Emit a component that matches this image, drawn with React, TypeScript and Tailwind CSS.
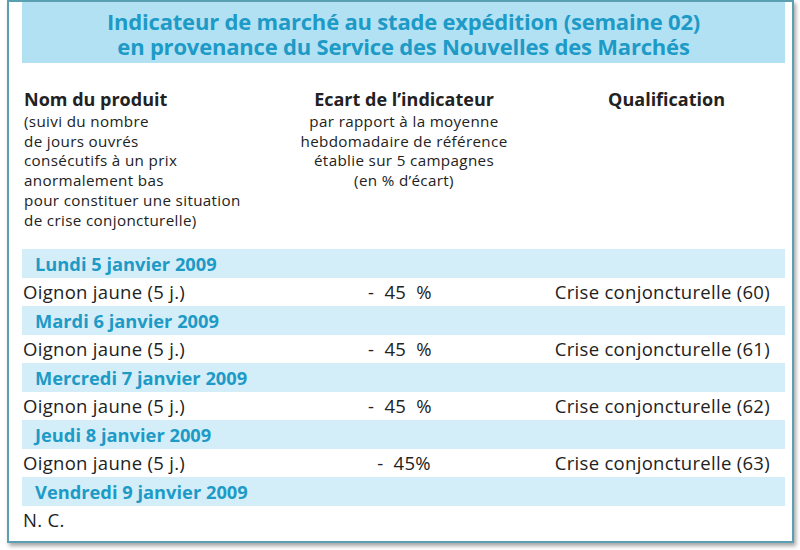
import React from "react";

const days = [
  { day: "Lundi 5 janvier 2009", value: "- 45 %", q: "Crise conjoncturelle (60)", vshift: "pl-[10px]" },
  { day: "Mardi 6 janvier 2009", value: "- 45 %", q: "Crise conjoncturelle (61)", vshift: "pl-[10px]" },
  { day: "Mercredi 7 janvier 2009", value: "- 45 %", q: "Crise conjoncturelle (62)", vshift: "pl-[10px]" },
  { day: "Jeudi 8 janvier 2009", value: "- 45%", q: "Crise conjoncturelle (63)", vshift: "pl-[18px]" },
];

export default function App() {
  return (
    <div
      className="w-[800px] h-[550px] bg-white pl-[7px] overflow-hidden"
      style={{ fontFamily: "'Open Sans', 'Noto Sans', sans-serif" }}
    >
      <div className="w-[787px] h-[543px] border-2 border-[#5a9fb2] bg-white shadow-[2px_3px_4px_rgba(0,0,0,0.35)] pl-[13px] pr-[7px]">
        {/* Title band */}
        <div className="h-[61px] bg-[#b3e1f4] flex flex-col items-center justify-center pt-[3px] text-[#1d9ac6] font-bold text-[22px] leading-[25px] tracking-[-0.2px]">
          <div className="leading-[25px]">Indicateur de marché au stade expédition (semaine 02)</div>
          <div className="leading-[25px]">en provenance du Service des Nouvelles des Marchés</div>
        </div>

        {/* Header */}
        <div className="grid grid-cols-[278px_190px_295px] pt-[25px] h-[186px] text-[#222]">
          <div className="pl-[2px]">
            <div className="font-bold text-[18px] leading-[22px]">Nom du produit</div>
            <div className="text-[15.2px] tracking-[0.35px] leading-[19.7px] pt-[2px] whitespace-nowrap">
              <div>(suivi du nombre</div>
              <div>de jours ouvrés</div>
              <div>consécutifs à un prix</div>
              <div>anormalement bas</div>
              <div>pour constituer une situation</div>
              <div>de crise conjoncturelle)</div>
            </div>
          </div>
          <div className="flex flex-col items-center pl-[18px]">
            <div className="font-bold text-[18px] leading-[22px] whitespace-nowrap">Ecart de l’indicateur</div>
            <div className="flex flex-col items-center text-[15.2px] tracking-[0.35px] leading-[19.7px] whitespace-nowrap pt-[2px]">
              <div>par rapport à la moyenne</div>
              <div>hebdomadaire de référence</div>
              <div>établie sur 5 campagnes</div>
              <div>(en % d’écart)</div>
            </div>
          </div>
          <div className="text-right pr-[60px]">
            <div className="font-bold text-[18px] leading-[22px]">Qualification</div>
          </div>
        </div>

        {/* Rows */}
        <div className="flex flex-col">
          {days.map((d) => (
            <React.Fragment key={d.day}>
              <div className="h-[29px] bg-[#d4eef9] flex items-center pl-[13px] text-[#1d9ac6] font-bold text-[18.3px]">
                {d.day}
              </div>
              <div className="h-[28px] grid grid-cols-[278px_190px_295px] items-center text-[18.5px] tracking-[0.3px] text-[#222]">
                <div className="pl-[1px]">Oignon jaune (5 j.)</div>
                <div className={`text-center [word-spacing:5px] ${d.vshift}`}>{d.value}</div>
                <div className="text-right pr-[15px]">{d.q}</div>
              </div>
            </React.Fragment>
          ))}
          <div className="h-[29px] bg-[#d4eef9] flex items-center pl-[13px] text-[#1d9ac6] font-bold text-[18.3px]">
            Vendredi 9 janvier 2009
          </div>
          <div className="h-[28px] flex items-center pl-[1px] text-[18.5px] tracking-[0.3px] text-[#222]">N. C.</div>
        </div>
      </div>
    </div>
  );
}
